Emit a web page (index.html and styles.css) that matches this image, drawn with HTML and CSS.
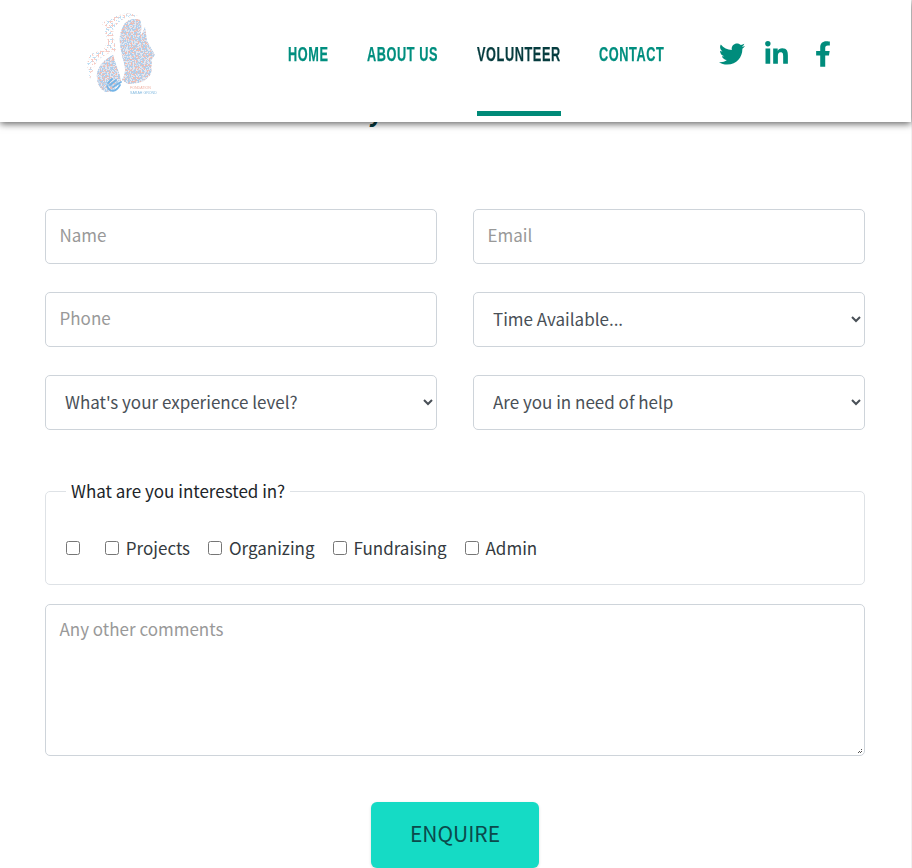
FILE: index.html
```html
<!DOCTYPE html>
<html lang="en">
<head>
<meta charset="utf-8">
<title>Volunteer</title>
<link rel="stylesheet" href="styles.css">
</head>
<body>
<header class="site-header">
  <a class="logo" href="#" aria-label="Fondation Sarah Grond">
    <svg class="logo-art" viewBox="0 0 85 95" width="85" height="95">
      <defs>
        <filter id="speck-blue" x="0" y="0" width="100%" height="100%" filterUnits="userSpaceOnUse" primitiveUnits="userSpaceOnUse">
          <feTurbulence type="fractalNoise" baseFrequency=".62" numOctaves="2" seed="4" result="n"/>
          <feColorMatrix in="n" type="matrix" values="0 0 0 0 .42  0 0 0 0 .62  0 0 0 0 .84  9 0 0 0 -3.9" result="c"/>
          <feComposite in="c" in2="SourceAlpha" operator="in"/>
          <feGaussianBlur stdDeviation=".65"/>
        </filter>
        <filter id="speck-red" x="0" y="0" width="100%" height="100%" filterUnits="userSpaceOnUse" primitiveUnits="userSpaceOnUse">
          <feTurbulence type="fractalNoise" baseFrequency=".55" numOctaves="2" seed="11" result="n"/>
          <feColorMatrix in="n" type="matrix" values="0 0 0 0 .88  0 0 0 0 .5  0 0 0 0 .44  0 9 0 0 -4.8" result="c"/>
          <feComposite in="c" in2="SourceAlpha" operator="in"/>
          <feGaussianBlur stdDeviation=".65"/>
        </filter>
        <filter id="speck-blue-thin" x="0" y="0" width="100%" height="100%" filterUnits="userSpaceOnUse" primitiveUnits="userSpaceOnUse">
          <feTurbulence type="fractalNoise" baseFrequency=".5" numOctaves="2" seed="7" result="n"/>
          <feColorMatrix in="n" type="matrix" values="0 0 0 0 .5  0 0 0 0 .72  0 0 0 0 .9  12 0 0 0 -6.4" result="c"/>
          <feComposite in="c" in2="SourceAlpha" operator="in"/>
          <feGaussianBlur stdDeviation=".65"/>
        </filter>
        <filter id="speck-red-thin" x="0" y="0" width="100%" height="100%" filterUnits="userSpaceOnUse" primitiveUnits="userSpaceOnUse">
          <feTurbulence type="fractalNoise" baseFrequency=".5" numOctaves="2" seed="19" result="n"/>
          <feColorMatrix in="n" type="matrix" values="0 0 0 0 .92  0 0 0 0 .6  0 0 0 0 .55  0 12 0 0 -6.6" result="c"/>
          <feComposite in="c" in2="SourceAlpha" operator="in"/>
          <feGaussianBlur stdDeviation=".65"/>
        </filter>
        <filter id="soft" x="-10%" y="-10%" width="120%" height="120%"><feGaussianBlur stdDeviation=".6"/></filter>
        <path id="shape" d="M45 18 C49 14 55 13 60 15 C62 19 61 24 61 31 L65 22 L67 36 L75 50 L71 55 C72 58 72 60 71 62 C72 66 71 70 68 72 C64 78 58 78 48 79 L42 75 C45 70 46 65 44 58 C41 46 39 38 40 30 C41 25 43 21 45 18 Z M17 68 C19 60 25 54 33 50 C35 58 39 66 41 75 C37 82 32 88 26 87 C20 85 16 77 17 68 Z"/>
        <path id="scatter" d="M22 18 L30 14 C38 9 48 6 58 11 L46 13 C38 16 34 22 33 28 C34 34 35 40 36 46 C28 48 18 52 14 62 L10 74 L7 60 L9 50 L24 44 L28 36 Z"/>
      </defs>
      <use href="#shape" class="logo-base" filter="url(#soft)"/>
      <use href="#shape" filter="url(#speck-blue)"/>
      <use href="#shape" filter="url(#speck-red)"/>
      <use href="#scatter" filter="url(#speck-blue-thin)"/>
      <use href="#scatter" filter="url(#speck-red-thin)"/>
      <path class="logo-hand" filter="url(#soft)" d="M27 81 C30 88 36 87 40 80 M30 80 L36 75 M33 82 L41 77 M28 78 L32 74"/>
      <g class="logo-caption" filter="url(#soft)">
        <text class="logo-caption-top" x="50" y="83.5">FONDATION</text>
        <text class="logo-caption-bottom" x="50" y="88.5">SARAH GROND</text>
      </g>
    </svg>
  </a>
  <nav class="main-nav">
    <a class="nav-link nav-home" href="#"><span>Home</span></a>
    <a class="nav-link nav-about" href="#"><span>About us</span></a>
    <a class="nav-link nav-volunteer is-active" href="#"><span>Volunteer</span></a>
    <a class="nav-link nav-contact" href="#"><span>Contact</span></a>
  </nav>
  <div class="social">
    <a href="#" aria-label="Twitter"><svg class="icon" viewBox="0 0 512 512"><path d="M459.37 151.716c.325 4.548.325 9.097.325 13.645 0 138.72-105.583 298.558-298.558 298.558-59.452 0-114.68-17.219-161.137-47.106 8.447.974 16.568 1.299 25.34 1.299 49.055 0 94.213-16.568 130.274-44.832-46.132-.975-84.792-31.188-98.112-72.772 6.498.974 12.995 1.624 19.818 1.624 9.421 0 18.843-1.3 27.614-3.573-48.081-9.747-84.143-51.98-84.143-102.985v-1.299c13.969 7.797 30.214 12.67 47.431 13.319-28.264-18.843-46.781-51.005-46.781-87.391 0-19.492 5.197-37.36 14.294-52.954 51.655 63.675 129.3 105.258 216.365 109.807-1.624-7.797-2.599-15.918-2.599-24.04 0-57.828 46.782-104.934 104.934-104.934 30.213 0 57.502 12.67 76.67 33.137 23.715-4.548 46.456-13.32 66.599-25.34-7.798 24.366-24.366 44.833-46.132 57.827 21.117-2.273 41.584-8.122 60.426-16.243-14.292 20.791-32.161 39.308-52.628 54.253z"/></svg></a>
    <a href="#" aria-label="LinkedIn"><svg class="icon icon-in" viewBox="0 0 448 512"><path d="M100.28 448H7.4V148.9h92.88zM53.79 108.1C24.09 108.1 0 83.5 0 53.8a53.79 53.79 0 0 1 107.58 0c0 29.7-24.1 54.3-53.79 54.3zM447.9 448h-92.68V302.4c0-34.7-.7-79.2-48.29-79.2-48.29 0-55.69 37.7-55.69 76.7V448h-92.78V148.9h89.08v40.8h1.3c12.4-23.5 42.69-48.3 87.88-48.3 94 0 111.28 61.9 111.28 142.3V448z"/></svg></a>
    <a href="#" aria-label="Facebook"><svg class="icon icon-f" viewBox="0 0 320 512"><path d="M279.14 288l14.22-92.66h-88.91v-60.13c0-25.35 12.42-50.06 52.24-50.06h40.42V6.26S260.43 0 225.36 0c-73.22 0-121.08 44.38-121.08 124.72v70.62H22.89V288h81.39v224h100.17V288z"/></svg></a>
  </div>
</header>
<main class="page">
  <h2 class="section-title">Would you like to volunteer?</h2>
  <form class="form">
    <div class="form-grid">
      <input class="field" type="text" placeholder="Name">
      <input class="field" type="email" placeholder="Email">
      <input class="field" type="tel" placeholder="Phone">
      <select class="field field-select"><option>Time Available...</option></select>
      <select class="field field-select"><option>What's your experience level?</option></select>
      <select class="field field-select"><option>Are you in need of help</option></select>
    </div>
    <fieldset class="interests">
      <legend>What are you interested in?</legend>
      <div class="checks">
        <label class="check check-empty"><input type="checkbox"></label>
        <label class="check"><input type="checkbox">Projects</label>
        <label class="check"><input type="checkbox">Organizing</label>
        <label class="check"><input type="checkbox">Fundraising</label>
        <label class="check"><input type="checkbox">Admin</label>
      </div>
    </fieldset>
    <div class="comments-wrap">
      <textarea class="field comments" placeholder="Any other comments"></textarea>
      <svg class="grip" viewBox="0 0 5 5" width="5" height="5" aria-hidden="true"><path d="M3 0h1v1H3zM1 2h1v1H1zM3 2h1v1H3zM0 3h1v1H0zM2 3h1v1H2z"/></svg>
    </div>
    <div class="actions"><button class="submit" type="button">ENQUIRE</button></div>
  </form>
</main>
</body>
</html>
```

FILE: styles.css
```css
* { box-sizing: border-box; }
html, body { margin: 0; height: 868px; overflow: hidden; background: #fff; }
body { border-right: 1px solid #f1f1f1; font-family: "Noto Sans CJK SC", "Source Sans Pro", "Noto Sans", sans-serif; font-size: 17px; color: #212529; }

.site-header {
  position: absolute; top: 0; left: 0; width: 911px; height: 122px;
  background: #fff; box-shadow: 0 2px 7px rgba(0,0,0,.6);
  display: flex; align-items: flex-start; padding-left: 80px; z-index: 2;
}
.logo { display: block; margin-top: 5px; width: 85px; height: 95px; }
.logo-art { display: block; }
.logo-base { fill: #e6e8f0; }
.logo-hand { fill: none; stroke: #74b4e6; stroke-width: 1.8; stroke-linecap: round; }
.logo-caption { font-family: "Liberation Sans", sans-serif; font-size: 3.6px; }
.logo-caption-top { fill: #eeb0a2; }
.logo-caption-bottom { fill: #86bbe0; }

.main-nav { display: flex; margin-left: 123px; gap: 39px; }
.nav-link {
  display: block; height: 116px; padding-top: 42px; text-decoration: none; text-transform: uppercase;
  font-family: "Liberation Sans Narrow", "Liberation Sans", sans-serif; font-weight: 700;
  font-size: 21px; line-height: 24px; letter-spacing: 1px; color: #008e7f; white-space: nowrap;
  -webkit-text-stroke: .25px currentColor;
}
.nav-link span { display: block; transform: scaleX(.605); transform-origin: left center; }
.nav-home { width: 40px; }
.nav-about { width: 71px; }
.nav-volunteer { width: 84px; }
.nav-contact { width: 65px; margin-left: -1px; }
.nav-link.is-active { color: #063c3f; border-bottom: 5px solid #008a78; }

.social { display: flex; align-items: center; margin: 41px 0 0 55px; gap: 20px; }
.social a { display: block; height: 26px; }
.icon { display: block; height: 26px; width: 26px; fill: #008c7c; }
.icon-in { width: 23px; }
.icon-f { width: 16px; margin-left: 7px; }

.page { padding: 92px 46px 0 45px; }
.section-title { margin: 0 0 81px; padding-left: 8px; text-align: center; font-size: 25px; line-height: 36px; font-weight: 700; color: #063c3f; }
.form-grid { display: grid; grid-template-columns: 392px 392px; column-gap: 36px; row-gap: 28px; }
.field {
  display: block; width: 100%; height: 55px; padding: 0 14px 5px 13.5px; background: #fff; margin: 0;
  border: 1px solid #ced4da; border-radius: 5px; font: inherit; color: #495057;
}
.field::placeholder { color: #999; opacity: 1; }
.field-select { padding: 0 15px 3px; }

.interests { margin: 50px 0 0; padding: 34px 20px 19px; border: 1px solid #dee2e6; border-radius: 5px; min-width: 0; height: 105px; }
.interests legend { padding: 0 5px; line-height: 22px; color: #212529; }
.checks { display: flex; }
.check { display: flex; align-items: center; gap: 6.85px; margin-right: 18px; line-height: 24px; color: #343a40; }
.check-empty { margin-right: 25px; }
.check input { width: 14px; height: 14px; margin: 0; }

.comments-wrap { position: relative; margin-top: 19px; }
.comments { height: 152px; padding: 11px 14px 12px 13.5px; resize: none; }
.grip { position: absolute; right: 2px; bottom: 2px; fill: #555; }
.actions { display: flex; justify-content: center; margin-top: 46px; }
.submit {
  width: 168px; height: 66px; padding: 0 0 4px; border: 0; border-radius: 6px; background: #15dbc5; color: #0b4a4c;
  font: inherit; font-size: 21px; box-shadow: 0 1px 3px rgba(0,0,0,.15);
}
```
